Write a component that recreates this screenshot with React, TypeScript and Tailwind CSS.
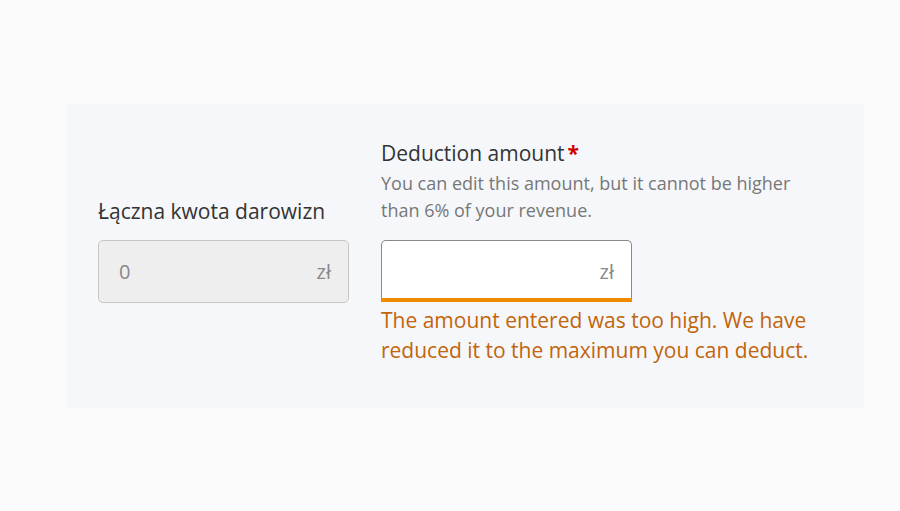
export default function App() {
  return (
    <div
      className="min-h-[511px] w-full bg-[#fbfbfc] pt-[104px] pl-[67px] pr-[36px]"
      style={{ fontFamily: '"Open Sans", "Noto Sans", sans-serif' }}
    >
      <div className="w-[797px] h-[304px] bg-[#f5f7fa] pl-[31px] pt-[34px]">
        <div className="grid grid-cols-[251px_440px] gap-x-8">
          {/* labels row */}
          <div className="flex items-end pb-[14px]">
            <label className="text-[21px] leading-[30px] text-[#333]">
              Łączna kwota darowizn
            </label>
          </div>
          <div className="flex flex-col pb-[16px]">
            <label className="text-[21px] leading-[30px] text-[#333]">
              Deduction amount<span className="ml-[3px] font-bold text-[#c00]">*</span>
            </label>
            <p className="mt-[2px] text-[18px] leading-[27px] text-[#777]">
              You can edit this amount, but it cannot be higher than 6% of your revenue.
            </p>
          </div>

          {/* inputs row */}
          <div className="flex h-[63px] items-center justify-between rounded-[5px] border border-[#c6c6c6] bg-[#eeeeee] pl-[20px] pr-[17px] text-[20px] text-[#888]">
            <span>0</span>
            <span>zł</span>
          </div>
          <div>
            <div className="flex h-[62px] w-[251px] items-center justify-end rounded-t-[5px] border border-b-0 border-[#8a8a8a] bg-white pr-[17px] text-[20px] text-[#888]">
              <span>zł</span>
            </div>
            <div className="-mt-[4px] h-[4px] w-[251px] bg-[#f08a00]" />
            <p className="mt-[3px] text-[21px] leading-[30px] text-[#c2650b]">
              The amount entered was too high. We have reduced it to the maximum you can deduct.
            </p>
          </div>
        </div>
      </div>
    </div>
  );
}
